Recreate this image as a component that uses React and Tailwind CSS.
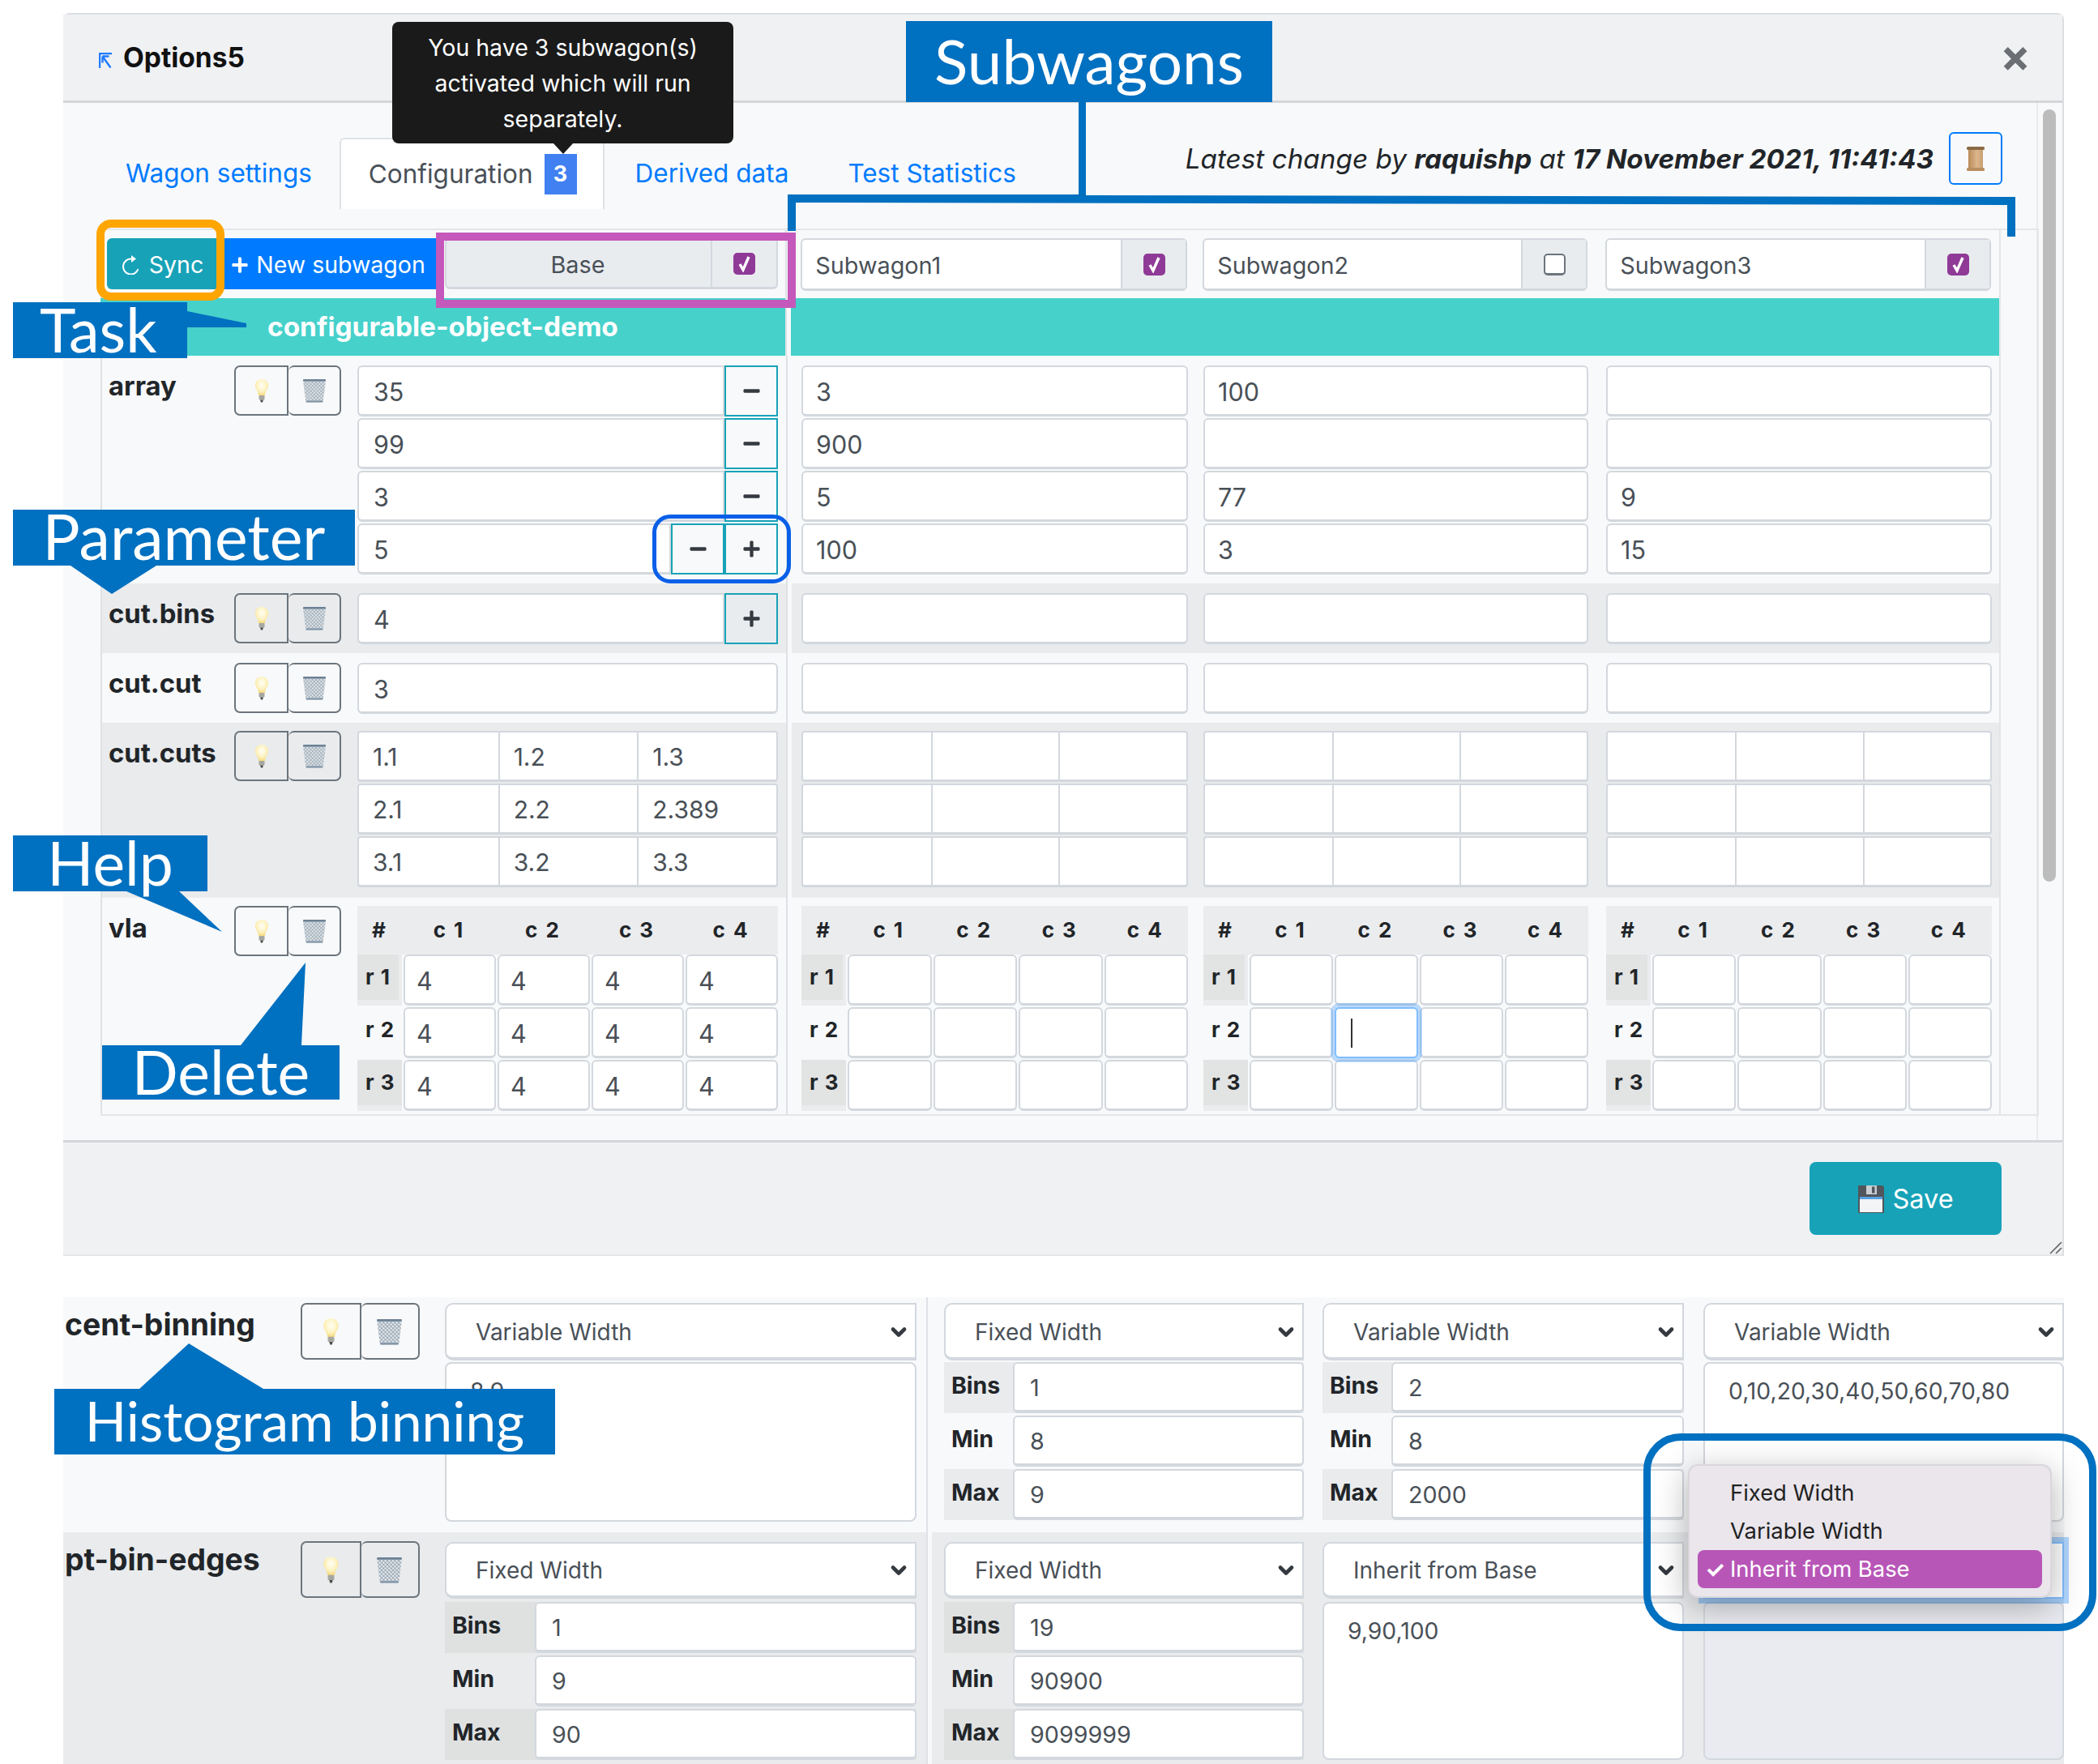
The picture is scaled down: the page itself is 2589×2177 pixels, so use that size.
import React from "react";
import { FaPlus, FaMinus } from "react-icons/fa";
import { ChevronDown } from "lucide-react";

const Bulb = ({ big }) => (
  <svg width={big ? 21 : 18} height={big ? 34 : 30} viewBox="0 0 18 30" className="shrink-0">
    <defs>
      <radialGradient id="bulbglass" cx="50%" cy="38%" r="60%">
        <stop offset="0%" stopColor="#fffef6" />
        <stop offset="65%" stopColor="#fdf2bf" />
        <stop offset="100%" stopColor="#f6da80" />
      </radialGradient>
    </defs>
    <path d="M9 1C4 1 1 4.600 1 9c0 3.600 2.600 6 3.600 9.200.3 1 .4 2 .5 3h7.800c.1-1 .2-2 .5-3C14.400 15 17 12.600 17 9c0-4.400-3-8-8-8z" fill="url(#bulbglass)" />
    <rect x="5.500" y="21" width="7" height="5.500" rx="1" fill="#a7a7a2" />
    <path d="M7 26.500h4l-1 3H8z" fill="#4d4d4d" />
  </svg>
);

const Trash = ({ big }) => (
  <svg width={big ? 33 : 30} height={big ? 33 : 30} viewBox="0 0 30 30" className="shrink-0">
    <defs>
      <pattern id="mesh" width="3" height="3" patternUnits="userSpaceOnUse" patternTransform="rotate(45)">
        <rect width="3" height="3" fill="#dfe5e9" />
        <path d="M0 0h3M0 0v3" stroke="#7d8e9e" strokeWidth="1" />
      </pattern>
    </defs>
    <path d="M1 2.500h28l-3.300 26q-.2 1-1.200 1H5.500q-1 0-1.200-1z" fill="url(#mesh)" />
    <rect x="1" y="1" width="28" height="2.500" rx="1" fill="#6c8195" />
    <rect x="4.500" y="27.500" width="21" height="2" rx="1" fill="#7f93a6" />
  </svg>
);

const Scroll = () => (
  <svg width="26" height="30" viewBox="0 0 26 30">
    <defs>
      <linearGradient id="parch" x1="0" x2="1" y1="0" y2="0">
        <stop offset="0%" stopColor="#b98a58" />
        <stop offset="60%" stopColor="#dcb78c" />
        <stop offset="100%" stopColor="#c79e70" />
      </linearGradient>
    </defs>
    <rect x="4" y="2" width="18" height="26" fill="url(#parch)" />
    <rect x="2" y="0" width="22" height="4" rx="1.500" fill="#8a6a45" />
    <rect x="2" y="26" width="22" height="4" rx="1.500" fill="#b98d5f" />
  </svg>
);

const Floppy = () => (
  <svg width="34" height="34" viewBox="0 0 34 34">
    <path d="M1 0h30l2 2v32H1z" fill="#50565c" />
    <rect x="11" y="0" width="13" height="11" fill="#c9ced3" />
    <rect x="18" y="1.500" width="3.500" height="8" fill="#50565c" />
    <rect x="3" y="14" width="28" height="3" fill="#5aa0e0" />
    <rect x="3" y="17" width="28" height="16" fill="#f3f4f5" />
  </svg>
);

const Chk = ({ on }) =>
  on ? (
    <span className="flex items-center justify-center w-[27px] h-[27px] rounded-[5px] bg-[#8f3a97]">
      <svg width="15" height="21" viewBox="0 0 15 21">
        <path d="M2 11l4 7L13 2" fill="none" stroke="#fff" strokeWidth="3.400" />
      </svg>
    </span>
  ) : (
    <span className="block w-[27px] h-[27px] rounded-[5px] border-2 border-[#6c757d] border-b-[3px] bg-white" />
  );

const inputBox =
  "flex items-center h-[63px] pt-[3px] bg-white border-2 border-b-[3px] border-[#d3d8de] rounded-[6px] text-[30.500px] text-[#495057]";

const Inp = ({ v, pl = "pl-[18px]" }) => <div className={`${inputBox} ${pl}`}>{v}</div>;

const StepBtn = ({ kind, dark }) => (
  <span
    className={`flex items-center justify-center w-[66px] h-[63px] border-2 border-[#17a2b8] text-[#343a40] text-[23px] ${
      dark ? "bg-[#e9ecef]" : "bg-[#f8f9fa]"
    }`}
  >
    {kind === "+" ? <FaPlus /> : <FaMinus />}
  </span>
);

const Actions = ({ className, big }) => (
  <div className={`flex shrink-0 ${className}`}>
    <span className="flex flex-1 items-center justify-center border-2 border-[#6c757d] rounded-l-[7px]">
      <Bulb big={big} />
    </span>
    <span className="flex flex-1 items-center justify-center border-2 border-l-0 border-[#6c757d] rounded-[7px]">
      <Trash big={big} />
    </span>
  </div>
);

const Divider = () => <div className="w-[7px] shrink-0 bg-[#f8f9fa] border-l-2 border-[#dee2e6]" />;

function Row({ label, bg, topPad, btnTop, pb, base, subs }) {
  return (
    <div className="flex">
      <div className={`flex w-[846px] pl-[8px] pr-[10px] border-l-2 border-[#dee2e6] ${bg}`}>
        <div className="w-[155px] shrink-0 pt-[18px] text-[32.800px] leading-[38px] font-bold text-[#212529]">{label}</div>
        <Actions className={`w-[132px] h-[62px] ${btnTop}`} />
        <div className={`w-[519px] ml-[20px] ${topPad} ${pb}`}>{base}</div>
      </div>
      <Divider />
      <div className={`flex w-[1492px] pl-[12px] ${bg}`}>
        <div className={`w-[477px] ${topPad}`}>{subs[0]}</div>
        <div className={`w-[475px] ml-[19px] ${topPad}`}>{subs[1]}</div>
        <div className={`w-[476px] ml-[22px] ${topPad}`}>{subs[2]}</div>
      </div>
    </div>
  );
}

const Stack = ({ vals }) => (
  <div className="flex flex-col gap-[2px]">
    {vals.map((v, i) => (
      <Inp key={i} v={v} pl="pl-[16px]" />
    ))}
  </div>
);

const Grid3 = ({ rows }) => (
  <div className="flex flex-col gap-[2px]">
    {rows.map((r, i) => (
      <div key={i} className="grid grid-cols-3 h-[63px] bg-white border-2 border-b-[3px] border-[#d3d8de] rounded-[4px]">
        {r.map((c, j) => (
          <div key={j} className={`flex items-center pt-[3px] pl-[17px] text-[30px] text-[#495057] ${j ? "border-l-2 border-[#d3d8de]" : ""}`}>
            {c}
          </div>
        ))}
      </div>
    ))}
  </div>
);

const Vla = ({ vals, focus }) => (
  <div className="flex flex-col">
    <div className="grid grid-cols-[55px_1fr_1fr_1fr_1fr] h-[60px] pb-[2px] items-center bg-[#ebecee] text-center text-[26px] font-bold tracking-[2px] text-[#212529]">
      <span>#</span>
      <span>c 1</span>
      <span>c 2</span>
      <span>c 3</span>
      <span>c 4</span>
    </div>
    {["r 1", "r 2", "r 3"].map((r, i) => (
      <div key={r} className="grid grid-cols-[55px_1fr_1fr_1fr_1fr] gap-x-[2px] mb-[2px]">
        <div className={i === 1 ? "h-[63px]" : "h-[63px] bg-[#ebecee]"}>
          <div className={`flex items-center pl-[10px] pb-[2px] h-[56px] text-[26px] font-bold tracking-[1px] text-[#212529] ${i === 1 ? "" : i === 0 ? "w-[51px] bg-[#e2e3e3]" : "bg-[#e2e3e3]"}`}>
            {r}
          </div>
        </div>
        {[0, 1, 2, 3].map((c) =>
          focus && i === 1 && c === 1 ? (
            <div key={c} className="relative z-10 flex items-center h-[63px] pl-[18px] bg-white border-2 border-[#80bdff] rounded-[6px] shadow-[0_0_0_5px_rgba(0,123,255,0.25)]">
              <span className="block w-[2px] h-[36px] bg-[#333]" />
            </div>
          ) : (
            <Inp key={c} v={vals} pl="pl-[14px]" />
          )
        )}
      </div>
    ))}
  </div>
);

const Select = ({ v, h }) => (
  <div className={`flex items-center justify-between ${h} pt-[2px] bg-white border-2 border-[#d3d8de] border-b-[4px] rounded-l-[10px] pl-[36px] pr-[6px] text-[28px] text-[#495057]`}>
    <span>{v}</span>
    <ChevronDown size={28} strokeWidth={4} className="text-[#343a40]" />
  </div>
);

const Binning = ({ labelW, vals, dark }) => (
  <div className="flex flex-col gap-[3px]">
    {["Bins", "Min", "Max"].map((l, i) => (
      <div key={l} className={`flex h-[63px] ${i === 1 ? "" : dark ? "bg-[#dfe1e1]" : "bg-[#e9ebed]"}`}>
        <div className={`${labelW} shrink-0 pl-[9px] pt-[11px] text-[28.500px] leading-[36px] font-bold text-[#212529]`}>{l}</div>
        <div className="flex flex-1 items-center h-[63px] pl-[19px] pt-[2px] bg-white border-2 border-b-[4px] border-[#d3d8de] rounded-[6px] text-[28.700px] text-[#495057]">
          {vals[i]}
        </div>
      </div>
    ))}
  </div>
);

const Area = ({ v, h, bg = "bg-white" }) => (
  <div className={`${h} ${bg} border-2 border-[#d3d8de] rounded-[8px] pl-[29px] pt-[15px] text-[28.300px] leading-[38px] text-[#495057]`}>{v}</div>
);

const Title = ({ className, children }) => (
  <div className={`absolute flex items-center justify-center pb-[3px] bg-[#0070c0] text-white font-[family-name:Lato,sans-serif] ${className}`}>{children}</div>
);

function LowerRow({ label, bg, pt, top, btnClass, base, subs }) {
  return (
    <div className="flex">
      <div className={`flex w-[1065px] pl-[2px] pr-[12px] ${bg}`}>
        <div className={`w-[291px] shrink-0 text-[37.300px] leading-[42px] font-bold text-[#212529] ${top}`}>{label}</div>
        <Actions big className={`w-[147px] h-[70px] ${btnClass}`} />
        <div className={`w-[582px] ml-[31px] ${pt} pb-[13px]`}>{base}</div>
      </div>
      <Divider />
      <div className={`flex w-[1397px] pl-[15px] ${bg}`}>
        <div className={`w-[444px] ${pt}`}>{subs[0]}</div>
        <div className={`w-[446px] ml-[23px] ${pt}`}>{subs[1]}</div>
        <div className={`w-[445px] ml-[24px] ${pt}`}>{subs[2]}</div>
      </div>
    </div>
  );
}

export default function App() {
  const darkRow = "bg-[#e9ebed]";
  const lightRow = "bg-[#f8f9fa]";
  return (
    <div className="relative w-[2589px] h-[2177px] overflow-hidden bg-white font-[family-name:Inter,sans-serif]">
      {/* modal */}
      <div className="ml-[78px] mt-[16px] w-[2469px] h-[1534px] flex flex-col rounded-t-[8px] border-t-2 border-r-2 border-[#dcdfe2]">
        <div className="flex items-center justify-between h-[109px] shrink-0 pl-[44px] pr-[39px] bg-[#f0f1f3] border-b-[3px] border-[#d4d6d9]">
          <div className="flex items-center gap-[12px]">
            <svg width="18" height="20" viewBox="0 0 18 20" className="mt-[8px]">
              <path d="M1 19V1h15M4.500 4.500l10 14M4.500 4.500h8M4.500 4.500v8" fill="none" stroke="#1e7bff" strokeWidth="2.400" />
            </svg>
            <span className="text-[33.500px] font-bold text-[#111]">Options5</span>
          </div>
          <span className="-mt-[4px] text-[56px] font-bold leading-none text-[#6b6f73]">×</span>
        </div>

        <div className="flex h-[1280px] shrink-0 bg-[#f8f9fa]">
          <div className="flex flex-col w-[2437px] shrink-0 border-r-2 border-[#e9ebed]">
            <div className="flex justify-between h-[155px] pl-[41px] pr-[42px]">
              <nav className="flex h-[88px] mt-[43px] items-center text-[31.500px]">
                <a className="pl-[36px] pr-[34px] text-[#007bff]">Wagon settings</a>
                <a className="flex items-center h-[88px] pl-[34px] pr-[32px] gap-[14px] bg-white border-2 border-b-0 border-[#dee2e6] rounded-t-[6px] text-[#495057]">
                  Configuration
                  <span className="flex items-center justify-center w-[40px] h-[50px] bg-[#4080f0] text-white font-bold text-[27px]">3</span>
                </a>
                <a className="pl-[38px] pr-[73px] text-[#007bff]">Derived data</a>
                <a className="text-[#007bff]">Test Statistics</a>
              </nav>
              <div className="flex items-center gap-[19px] mt-[36px] h-[65px]">
                <span className="pt-[3px] text-[33.300px] italic text-[#212529]">
                  Latest change by <b>raquishp</b> at <b>17 November 2021, 11:41:43</b>
                </span>
                <span className="flex items-center justify-center w-[66px] h-[65px] border-2 border-[#007bff] rounded-[6px]">
                  <Scroll />
                </span>
              </div>
            </div>

            <div className="ml-[46px] w-[2392px] h-[1095px] border-t-2 border-b-2 border-r-2 border-[#e3e6e9]">
              <div className="w-[2345px] h-full border-r-2 border-[#e3e6e9]">
                {/* column headers */}
                <div className="flex h-[84px]">
                  <div className="flex w-[846px] pt-[10px] pl-[6px] border-l-2 border-[#dee2e6]">
                    <span className="flex items-center justify-center gap-[11px] w-[135px] h-[63px] pt-[3px] pl-[3px] bg-[#17a2b8] rounded-l-[6px] text-[28.500px] text-white">
                      <svg width="22" height="24" viewBox="0 0 22 24">
                        <path d="M19.500 17A9.500 9.500 0 1 1 11 4.500" fill="none" stroke="#fff" strokeWidth="2" />
                        <path d="M11 0v9l6-4.500z" fill="#fff" />
                      </svg>
                      Sync
                    </span>
                    <span className="flex items-center justify-center gap-[9px] w-[271px] h-[63px] pt-[3px] pl-[5px] bg-[#007bff] text-[28.500px] text-white">
                      <FaPlus className="text-[22px]" />
                      New subwagon
                    </span>
                    <span className="flex ml-[11px] w-[411px] h-[63px] bg-[#e9ecef] border-2 border-b-[3px] border-[#d3d8de] rounded-[6px] text-[28.800px] text-[#495057]">
                      <span className="flex flex-1 items-center justify-center pt-[3px] pr-[2px]">Base</span>
                      <span className="flex items-center justify-center w-[81px] border-l-2 border-[#d3d8de]">
                        <Chk on />
                      </span>
                    </span>
                  </div>
                  <Divider />
                  <div className="flex w-[1492px] pt-[10px] pl-[12px]">
                    {[
                      ["Subwagon1", true, "w-[477px]"],
                      ["Subwagon2", false, "w-[475px] ml-[19px]"],
                      ["Subwagon3", true, "w-[476px] ml-[22px]"],
                    ].map(([n, on, cls]) => (
                      <span key={n} className={`flex h-[65px] bg-white border-2 border-b-[3px] border-[#d3d8de] rounded-[6px] text-[28.800px] text-[#495057] ${cls}`}>
                        <span className="flex flex-1 items-center pl-[16px] pt-[3px]">{n}</span>
                        <span className="flex items-center justify-center w-[80px] bg-[#e9ecef] border-l-2 border-[#d3d8de]">
                          <Chk on={on} />
                        </span>
                      </span>
                    ))}
                  </div>
                </div>

                {/* task */}
                <div className="flex h-[71px]">
                  <div className="flex items-center w-[846px] pl-[206px] bg-[#46d1cb] text-[33.400px] font-bold text-white">configurable-object-demo</div>
                  <Divider />
                  <div className="w-[1492px] bg-[#46d1cb]" />
                </div>

                <Row
                  label="array"
                  bg={lightRow}
                  topPad="pt-[12px]"
                  btnTop="mt-[12px]"
                  pb="pb-[11px]"
                  base={
                    <div className="flex flex-col gap-[2px]">
                      {["35", "99", "3"].map((v) => (
                        <div key={v} className="flex">
                          <div className={`flex-1 pl-[18px] ${inputBox} rounded-r-none`}>{v}</div>
                          <StepBtn kind="-" />
                        </div>
                      ))}
                      <div className="flex">
                        <div className={`flex-1 pl-[18px] ${inputBox} rounded-r-none`}>5</div>
                        <StepBtn kind="-" />
                        <StepBtn kind="+" />
                      </div>
                    </div>
                  }
                  subs={[
                    <Stack vals={["3", "900", "5", "100"]} />,
                    <Stack vals={["100", "", "77", "3"]} />,
                    <Stack vals={["", "", "9", "15"]} />,
                  ]}
                />
                <Row
                  label="cut.bins"
                  bg={darkRow}
                  topPad="pt-[12px]"
                  btnTop="mt-[12px]"
                  pb="pb-[11px]"
                  base={
                    <div className="flex">
                      <div className={`flex-1 pl-[18px] ${inputBox} rounded-r-none`}>4</div>
                      <StepBtn kind="+" dark />
                    </div>
                  }
                  subs={[<Inp v="" />, <Inp v="" />, <Inp v="" />]}
                />
                <Row label="cut.cut" bg={lightRow} topPad="pt-[12px]" btnTop="mt-[12px]" pb="pb-[11px]" base={<Inp v="3" />} subs={[<Inp v="" />, <Inp v="" />, <Inp v="" />]} />
                <Row
                  label="cut.cuts"
                  bg={darkRow}
                  topPad="pt-[10px]"
                  btnTop="mt-[10px]"
                  pb="pb-[13px]"
                  base={<Grid3 rows={[["1.1", "1.2", "1.3"], ["2.1", "2.2", "2.389"], ["3.1", "3.2", "3.3"]]} />}
                  subs={[0, 1, 2].map((k) => (
                    <Grid3 key={k} rows={[["", "", ""], ["", "", ""], ["", "", ""]]} />
                  ))}
                />
                <Row
                  label="vla"
                  bg={lightRow}
                  topPad="pt-[10px]"
                  btnTop="mt-[10px]"
                  pb="pb-[2px]"
                  base={<Vla vals="4" />}
                  subs={[<Vla vals="" />, <Vla vals="" focus />, <Vla vals="" />]}
                />
              </div>
            </div>
          </div>
          <div className="flex-1 pl-[6px] pt-[8px]">
            <div className="w-[16px] h-[953px] rounded-full bg-[#bcbcbc]" />
          </div>
        </div>

        <div className="relative flex flex-1 items-start justify-end pt-[24px] pr-[75px] bg-[#f0f1f3] border-t-[3px] border-[#d4d6d9] border-b-2 border-b-[#e3e5e7]">
          <span className="flex items-center justify-center gap-[9px] w-[237px] h-[90px] pt-[2px] bg-[#17a2b8] rounded-[8px] text-[32.500px] text-white">
            <Floppy />
            Save
          </span>
          <svg width="18" height="18" viewBox="0 0 18 18" className="absolute right-0 bottom-0">
            <path d="M17 3L3 17M17 10l-7 7" stroke="#666" strokeWidth="1.600" />
          </svg>
        </div>
      </div>

      {/* histogram binning section */}
      <div className="ml-[78px] mt-[51px] w-[2469px] flex flex-col">
        <LowerRow
          label="cent-binning"
          bg={lightRow}
          pt="pt-[7px]"
          top="pt-[13px]"
          btnClass="mt-[7px]"
          base={
            <div className="flex flex-col gap-[2px]">
              <Select v="Variable Width" h="h-[71px]" />
              <Area v="8,9" h="h-[197px]" />
            </div>
          }
          subs={[
            <div className="flex flex-col gap-[2px]">
              <Select v="Fixed Width" h="h-[71px]" />
              <Binning labelW="w-[85px]" vals={["1", "8", "9"]} />
            </div>,
            <div className="flex flex-col gap-[2px]">
              <Select v="Variable Width" h="h-[71px]" />
              <Binning labelW="w-[85px]" vals={["2", "8", "2000"]} />
            </div>,
            <div className="flex flex-col gap-[2px]">
              <Select v="Variable Width" h="h-[71px]" />
              <Area v="0,10,20,30,40,50,60,70,80" h="h-[197px]" />
            </div>,
          ]}
        />
        <LowerRow
          label="pt-bin-edges"
          bg={darkRow}
          pt="pt-[12px]"
          top="pt-[13px]"
          btnClass="mt-[11px]"
          base={
            <div className="flex flex-col gap-[4px]">
              <Select v="Fixed Width" h="h-[70px]" />
              <Binning labelW="w-[111px]" vals={["1", "9", "90"]} dark />
            </div>
          }
          subs={[
            <div className="flex flex-col gap-[4px]">
              <Select v="Fixed Width" h="h-[70px]" />
              <Binning labelW="w-[85px]" vals={["19", "90900", "9099999"]} dark />
            </div>,
            <div className="flex flex-col gap-[4px]">
              <Select v="Inherit from Base" h="h-[70px]" />
              <Area v="9,90,100" h="h-[195px]" />
            </div>,
            <div className="flex flex-col gap-[4px]">
              <div className="relative h-[70px] bg-white border-2 border-[#80bdff] shadow-[0_0_0_6px_rgba(0,123,255,0.3)]" />
              <Area v="" h="h-[195px]" bg="bg-[#e9ebf0]" />
            </div>,
          ]}
        />
      </div>

      {/* tooltip */}
      <div className="absolute left-[484px] top-[27px] w-[421px] h-[150px] pt-[2px] flex items-center justify-center rounded-[8px] bg-[#1a1a1a] text-center text-[28.500px] leading-[44px] text-white">
        You have 3 subwagon(s)
        <br />
        activated which will run
        <br />
        separately.
        <span className="absolute left-[199px] top-[150px] border-x-[12px] border-t-[13px] border-x-transparent border-t-[#1a1a1a]" />
      </div>

      {/* annotation overlay */}
      <svg width="2589" height="2177" viewBox="0 0 2589 2177" className="absolute left-0 top-0 pointer-events-none">
        <g fill="#0070c0">
          <polygon points="1331,120 1340,120 1340,241 2487,243 2487,292 2477,292 2477,253 982,250 982,285 972,285 972,240 1331,240" />
          <polygon points="231,384 304,399 304,404 231,404" />
          <polygon points="87,698 193,698 138,733" />
          <polygon points="156,1100 221,1100 274,1150" />
          <polygon points="297,1290 372,1290 377,1188" />
          <polygon points="172,1714 325,1714 233,1658" />
        </g>
      </svg>
      <Title className="left-[1118px] top-[26px] w-[452px] h-[100px] text-[76.500px]">Subwagons</Title>
      <Title className="left-[16px] top-[373px] w-[215px] h-[69px] justify-start pl-[33px] text-[75.500px]">Task</Title>
      <Title className="left-[16px] top-[629px] w-[422px] h-[69px] text-[77px]">Parameter</Title>
      <Title className="left-[16px] top-[1031px] w-[240px] h-[69px] text-[75px]">Help</Title>
      <Title className="left-[126px] top-[1290px] w-[293px] h-[67px] text-[75px]">Delete</Title>
      <Title className="left-[67px] top-[1714px] w-[618px] h-[81px] text-[67.500px]">Histogram binning</Title>

      <div className="absolute left-[119px] top-[271px] w-[158px] h-[100px] rounded-[18px] border-[10px] border-[#ffa500]" />
      <div className="absolute left-[538px] top-[287px] w-[444px] h-[93px] border-[10px] border-[#c558bb]" />
      <div className="absolute left-[805px] top-[635px] w-[171px] h-[85px] rounded-[22px] border-[5px] border-[#0a5fe8]" />

      {/* dropdown */}
      <div className="absolute left-[2083px] top-[1807px] w-[449px] h-[165px] px-[10px] pt-[10px] rounded-[12px] border-2 border-[#d9d7dc] bg-[#eae6ec] text-[27.400px] text-[#222] shadow-[0_10px_40px_rgba(0,0,0,0.3)]">
        <div className="h-[47px] pl-[40px] flex items-center">Fixed Width</div>
        <div className="h-[47px] pl-[40px] flex items-center">Variable Width</div>
        <div className="relative h-[47px] pl-[40px] flex items-center rounded-[8px] bg-[#b856b8] text-white">
          <span className="absolute left-[9px] text-[28px] font-bold">✓</span>
          Inherit from Base
        </div>
      </div>
      <div className="absolute left-[2028px] top-[1769px] w-[559px] h-[244px] rounded-[46px] border-[9px] border-[#0070c0]" />
    </div>
  );
}
